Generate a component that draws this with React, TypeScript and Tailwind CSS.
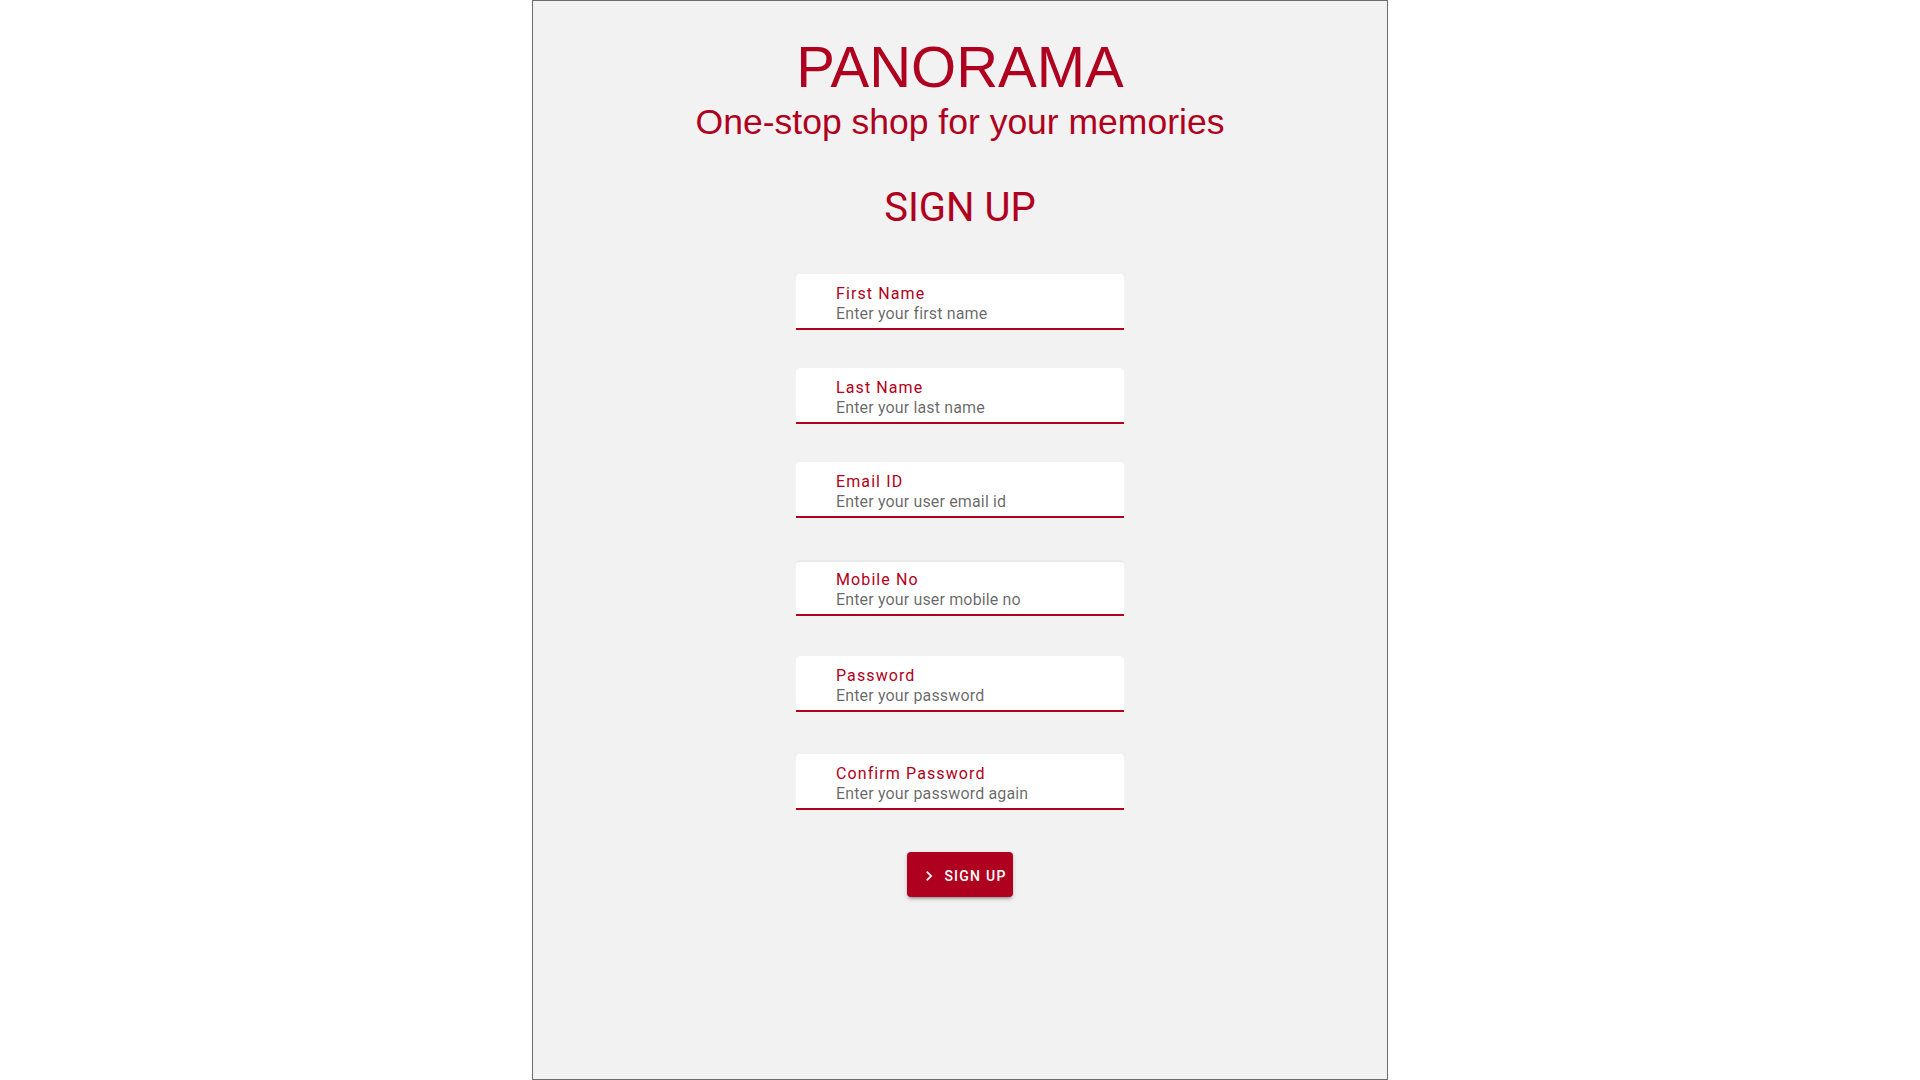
import React from 'react';

const fields = [
  { label: 'First Name', hint: 'Enter your first name', gap: 'mt-[46px]', top: 'pt-[10px]' },
  { label: 'Last Name', hint: 'Enter your last name', gap: 'mt-[38px]', top: 'pt-[10px]' },
  { label: 'Email ID', hint: 'Enter your user email id', gap: 'mt-[38px]', top: 'pt-[10px]' },
  { label: 'Mobile No', hint: 'Enter your user mobile no', gap: 'mt-[42px]', top: 'pt-[8px] border-t-2 border-t-[#e9e9e9]' },
  { label: 'Password', hint: 'Enter your password', gap: 'mt-[40px]', top: 'pt-[10px]' },
  { label: 'Confirm Password', hint: 'Enter your password again', gap: 'mt-[42px]', top: 'pt-[10px]' },
];

const App = () => {
  return (
    <div className="min-h-screen bg-white">
      <div className="mx-auto flex h-[1080px] w-[856px] flex-col items-center border border-[#6e6e6e] bg-[#f2f2f2] pt-[37px]">
        {/* Header */}
        <h1 className="font-['Liberation_Sans',Arial,sans-serif] text-[58px] leading-none text-[#b00020]">
          PANORAMA
        </h1>
        <p className="mt-[9px] font-['Liberation_Sans',Arial,sans-serif] text-[35.5px] leading-none text-[#b00020]">
          One-stop shop for your memories
        </p>
        <h2 className="mt-[47px] font-['Roboto',sans-serif] text-[40px] leading-none text-[#b00020]">
          SIGN UP
        </h2>

        {/* Form fields */}
        {fields.map((f) => (
          <div
            key={f.label}
            className={`${f.gap} ${f.top} w-[328px] rounded-t border-b-2 border-b-[#b00020] bg-white pb-[4px] pl-10 font-['Roboto',sans-serif]`}
          >
            <div className="text-base leading-5 tracking-[1.1px] text-[#b00020]">{f.label}</div>
            <div className="text-base leading-5 tracking-[0.15px] text-black/60">{f.hint}</div>
          </div>
        ))}

        <button className="mt-[42px] flex h-[45px] items-center rounded bg-[#b00020] pl-3 pr-[6px] pt-[3px] font-['Roboto',sans-serif] text-sm font-medium tracking-[1.25px] text-white shadow-[0_3px_3px_-2px_rgba(0,0,0,0.3),0_2px_4px_0_rgba(0,0,0,0.2)]">
          <svg viewBox="0 0 24 24" className="h-5 w-5 fill-white">
            <path d="M10 6L8.59 7.41 13.17 12l-4.58 4.59L10 18l6-6z" />
          </svg>
          <span className="ml-[5px]">SIGN UP</span>
        </button>
      </div>
    </div>
  );
};

export default App;
